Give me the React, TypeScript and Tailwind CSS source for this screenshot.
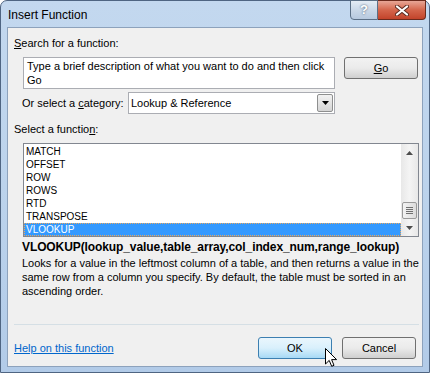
import React from "react";

const FUNCS = ["MATCH", "OFFSET", "ROW", "ROWS", "RTD", "TRANSPOSE", "VLOOKUP"];

const btn =
  "flex items-center justify-center rounded-[3px] border border-[#707070] bg-gradient-to-b from-[#f2f2f2] via-[#ebebeb] to-[#cfcfcf] text-[11px] text-black";

export default function App() {
  return (
    <div className="relative h-[375px] w-[433px] bg-white" style={{ fontFamily: '"Liberation Sans", Arial, sans-serif' }}>
      <div className="relative flex h-[373px] w-[430px] flex-col rounded-t-[7px] border border-[#4f6582] bg-gradient-to-b from-[#c3d8ef] via-[#bcd3ec] to-[#b2cbe8] px-[6px] pb-[5px]">
        {/* title bar */}
        <div className="flex h-[26px] items-center pl-[1px] pt-[2px] text-[12px] text-black">Insert Function</div>

        {/* caption buttons */}
        <div className="absolute right-[3px] top-[-1px] flex h-[20px]">
          <div className="flex w-[28px] items-center justify-center rounded-bl-[4px] border border-[#5b6f86] bg-gradient-to-b from-[#e4ecf5] via-[#cad8e8] to-[#b7c9df] text-[13px] font-bold text-white [text-shadow:0_0_2px_#354a63]">
            ?
          </div>
          <div className="flex w-[48px] items-center justify-center rounded-br-[4px] border border-l-0 border-[#6b2a1c] bg-gradient-to-b from-[#e7a696] via-[#d4654b] to-[#c2432a]">
            <svg width="14" height="11" viewBox="0 0 14 11">
              <path d="M2 1.5 L12 9.5 M12 1.5 L2 9.5" stroke="#5a2a20" strokeWidth="4" strokeLinecap="round" />
              <path d="M2 1.5 L12 9.5 M12 1.5 L2 9.5" stroke="white" strokeWidth="2.2" strokeLinecap="round" />
            </svg>
          </div>
        </div>

        {/* client area */}
        <div className="flex flex-1 flex-col border border-[#8da2bc] bg-[#f0f0f0] text-[11px] text-black">
          <div className="ml-[6px] mt-[8px] h-[14px] leading-[14px]">
            <u>S</u>earch for a function:
          </div>

          <div className="mt-[7px] flex">
            <div className="ml-[15px] h-[32px] w-[312px] border border-[#abadb3] bg-white pl-[3px] pt-[1px] leading-[14px]">
              Type a brief description of what you want to do and then click Go
            </div>
            <div className={`${btn} ml-[9px] h-[22px] w-[74px]`}>
              <span>
                <u>G</u>o
              </span>
            </div>
          </div>

          <div className="mt-[3px] flex items-center">
            <div className="ml-[14px] w-[106px] whitespace-nowrap">
              Or select a <u>c</u>ategory:
            </div>
            <div className="flex h-[22px] w-[207px] items-center border border-[#abadb3] bg-white pl-[2px]">
              <span className="flex-1">Lookup &amp; Reference</span>
              <div className="mr-[1px] flex h-[18px] w-[16px] items-center justify-center rounded-[2px] border border-[#8e8f8f] bg-gradient-to-b from-[#f2f2f2] to-[#d5d5d5]">
                <svg width="7" height="4" viewBox="0 0 7 4">
                  <path d="M0 0 H7 L3.5 4 Z" fill="black" />
                </svg>
              </div>
            </div>
          </div>

          <div className="ml-[6px] mt-[8px] h-[14px] leading-[14px]">
            Select a functio<u>n</u>:
          </div>

          <div className="ml-[15px] mt-[7px] flex h-[94px] w-[396px] border border-[#828790] bg-white">
            <div className="flex flex-1 flex-col pt-[1px]">
              {FUNCS.map((f) => (
                <div
                  key={f}
                  className={
                    f === "VLOOKUP"
                      ? "h-[13px] border border-dotted border-[#e8a860] bg-[#3399ff] pl-[1px] text-[10px] leading-[11px] text-white"
                      : "h-[13px] pl-[2px] text-[10px] leading-[13px]"
                  }
                >
                  {f}
                </div>
              ))}
            </div>
            <div className="flex w-[17px] flex-col items-center bg-gradient-to-r from-[#e8e8e8] via-[#f4f4f4] to-[#e8e8e8]">
              <div className="flex h-[17px] items-center justify-center">
                <svg width="7" height="4" viewBox="0 0 7 4">
                  <path d="M0 4 H7 L3.5 0 Z" fill="#4d4d4d" />
                </svg>
              </div>
              <div className="mt-[41px] flex h-[17px] w-[15px] flex-col items-center justify-center gap-[1px] rounded-[2px] border border-[#9a9a9a] bg-gradient-to-r from-[#f3f3f3] to-[#dcdcdc]">
                <div className="h-[1px] w-[7px] bg-[#707070]" />
                <div className="h-[1px] w-[7px] bg-[#707070]" />
                <div className="h-[1px] w-[7px] bg-[#707070]" />
                <div className="h-[1px] w-[7px] bg-[#707070]" />
              </div>
              <div className="mt-[1px] flex h-[16px] items-center justify-center">
                <svg width="7" height="4" viewBox="0 0 7 4">
                  <path d="M0 0 H7 L3.5 4 Z" fill="#4d4d4d" />
                </svg>
              </div>
            </div>
          </div>

          <div className="ml-[14px] mt-[3px] h-[14px] text-[12px] font-bold leading-[14px] tracking-[-0.1px]">
            VLOOKUP(lookup_value,table_array,col_index_num,range_lookup)
          </div>
          <div className="ml-[14px] mt-[2px] w-[400px] leading-[14px]">
            Looks for a value in the leftmost column of a table, and then returns a value in the same row from a column you specify. By default, the table must be sorted in an ascending order.
          </div>

          <div className="ml-[6px] mt-[26px] h-[1px] w-[405px] bg-[#d5dfe5]" />

          <div className="mt-[12px] flex items-center">
            <div className="ml-[6px] flex-1 text-[#0066cc] underline">Help on this function</div>
            <div className="h-[22px] w-[74px] rounded-[3px] border border-[#3c7fb1] bg-gradient-to-b from-[#eaf6fd] via-[#d9f0fc] to-[#a7d9f5] text-center leading-[20px]">
              OK
            </div>
            <div className={`${btn} ml-[10px] mr-[6px] h-[22px] w-[74px]`}>Cancel</div>
          </div>
        </div>
      </div>

      {/* mouse pointer */}
      <svg className="absolute left-[325px] top-[348px]" width="13" height="20" viewBox="0 0 13 20">
        <path d="M0.5 0.5 V16 L4.2 12.4 L6.7 18.3 L9 17.3 L6.6 11.6 H11.6 Z" fill="white" stroke="black" strokeWidth="1" strokeLinejoin="miter" />
      </svg>
    </div>
  );
}
